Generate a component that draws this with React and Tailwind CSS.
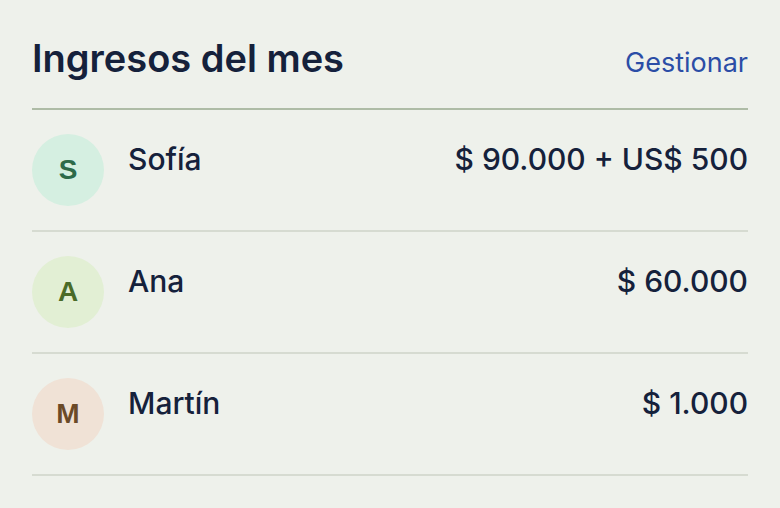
const rows = [
  { initial: "S", name: "Sofía", amount: "$ 90.000 + US$ 500", bg: "bg-[#d5efe1]", fg: "text-[#2d6a49]" },
  { initial: "A", name: "Ana", amount: "$ 60.000", bg: "bg-[#e2efd4]", fg: "text-[#4a6b28]" },
  { initial: "M", name: "Martín", amount: "$ 1.000", bg: "bg-[#f0e2d6]", fg: "text-[#6b4a28]" },
];

export default function App() {
  return (
    <div className="min-h-[508px] w-full bg-[#eef1eb] px-8 pt-[34px] font-['Inter',sans-serif] text-[#15213b]">
      <div className="flex items-baseline justify-between border-b-2 border-[#aebca6] pb-6">
        <h1 className="text-[38px] leading-[48px] font-semibold">Ingresos del mes</h1>
        <a href="#" className="text-[27px] text-[#2b4da6]">Gestionar</a>
      </div>
      <ul>
        {rows.map((row) => (
          <li key={row.name} className="flex items-start gap-6 border-b-2 border-[#d6dbd1] py-6">
            <div className={`flex h-[72px] w-[72px] shrink-0 items-center justify-center rounded-full ${row.bg}`}>
              <span className={`font-['Liberation_Sans',sans-serif] text-[28px] font-bold ${row.fg}`}>{row.initial}</span>
            </div>
            <span className="mt-[3px] flex-1 text-[30px] leading-[45px] font-medium">{row.name}</span>
            <span className="mt-[3px] text-[30px] leading-[45px] font-medium">{row.amount}</span>
          </li>
        ))}
      </ul>
    </div>
  );
}
